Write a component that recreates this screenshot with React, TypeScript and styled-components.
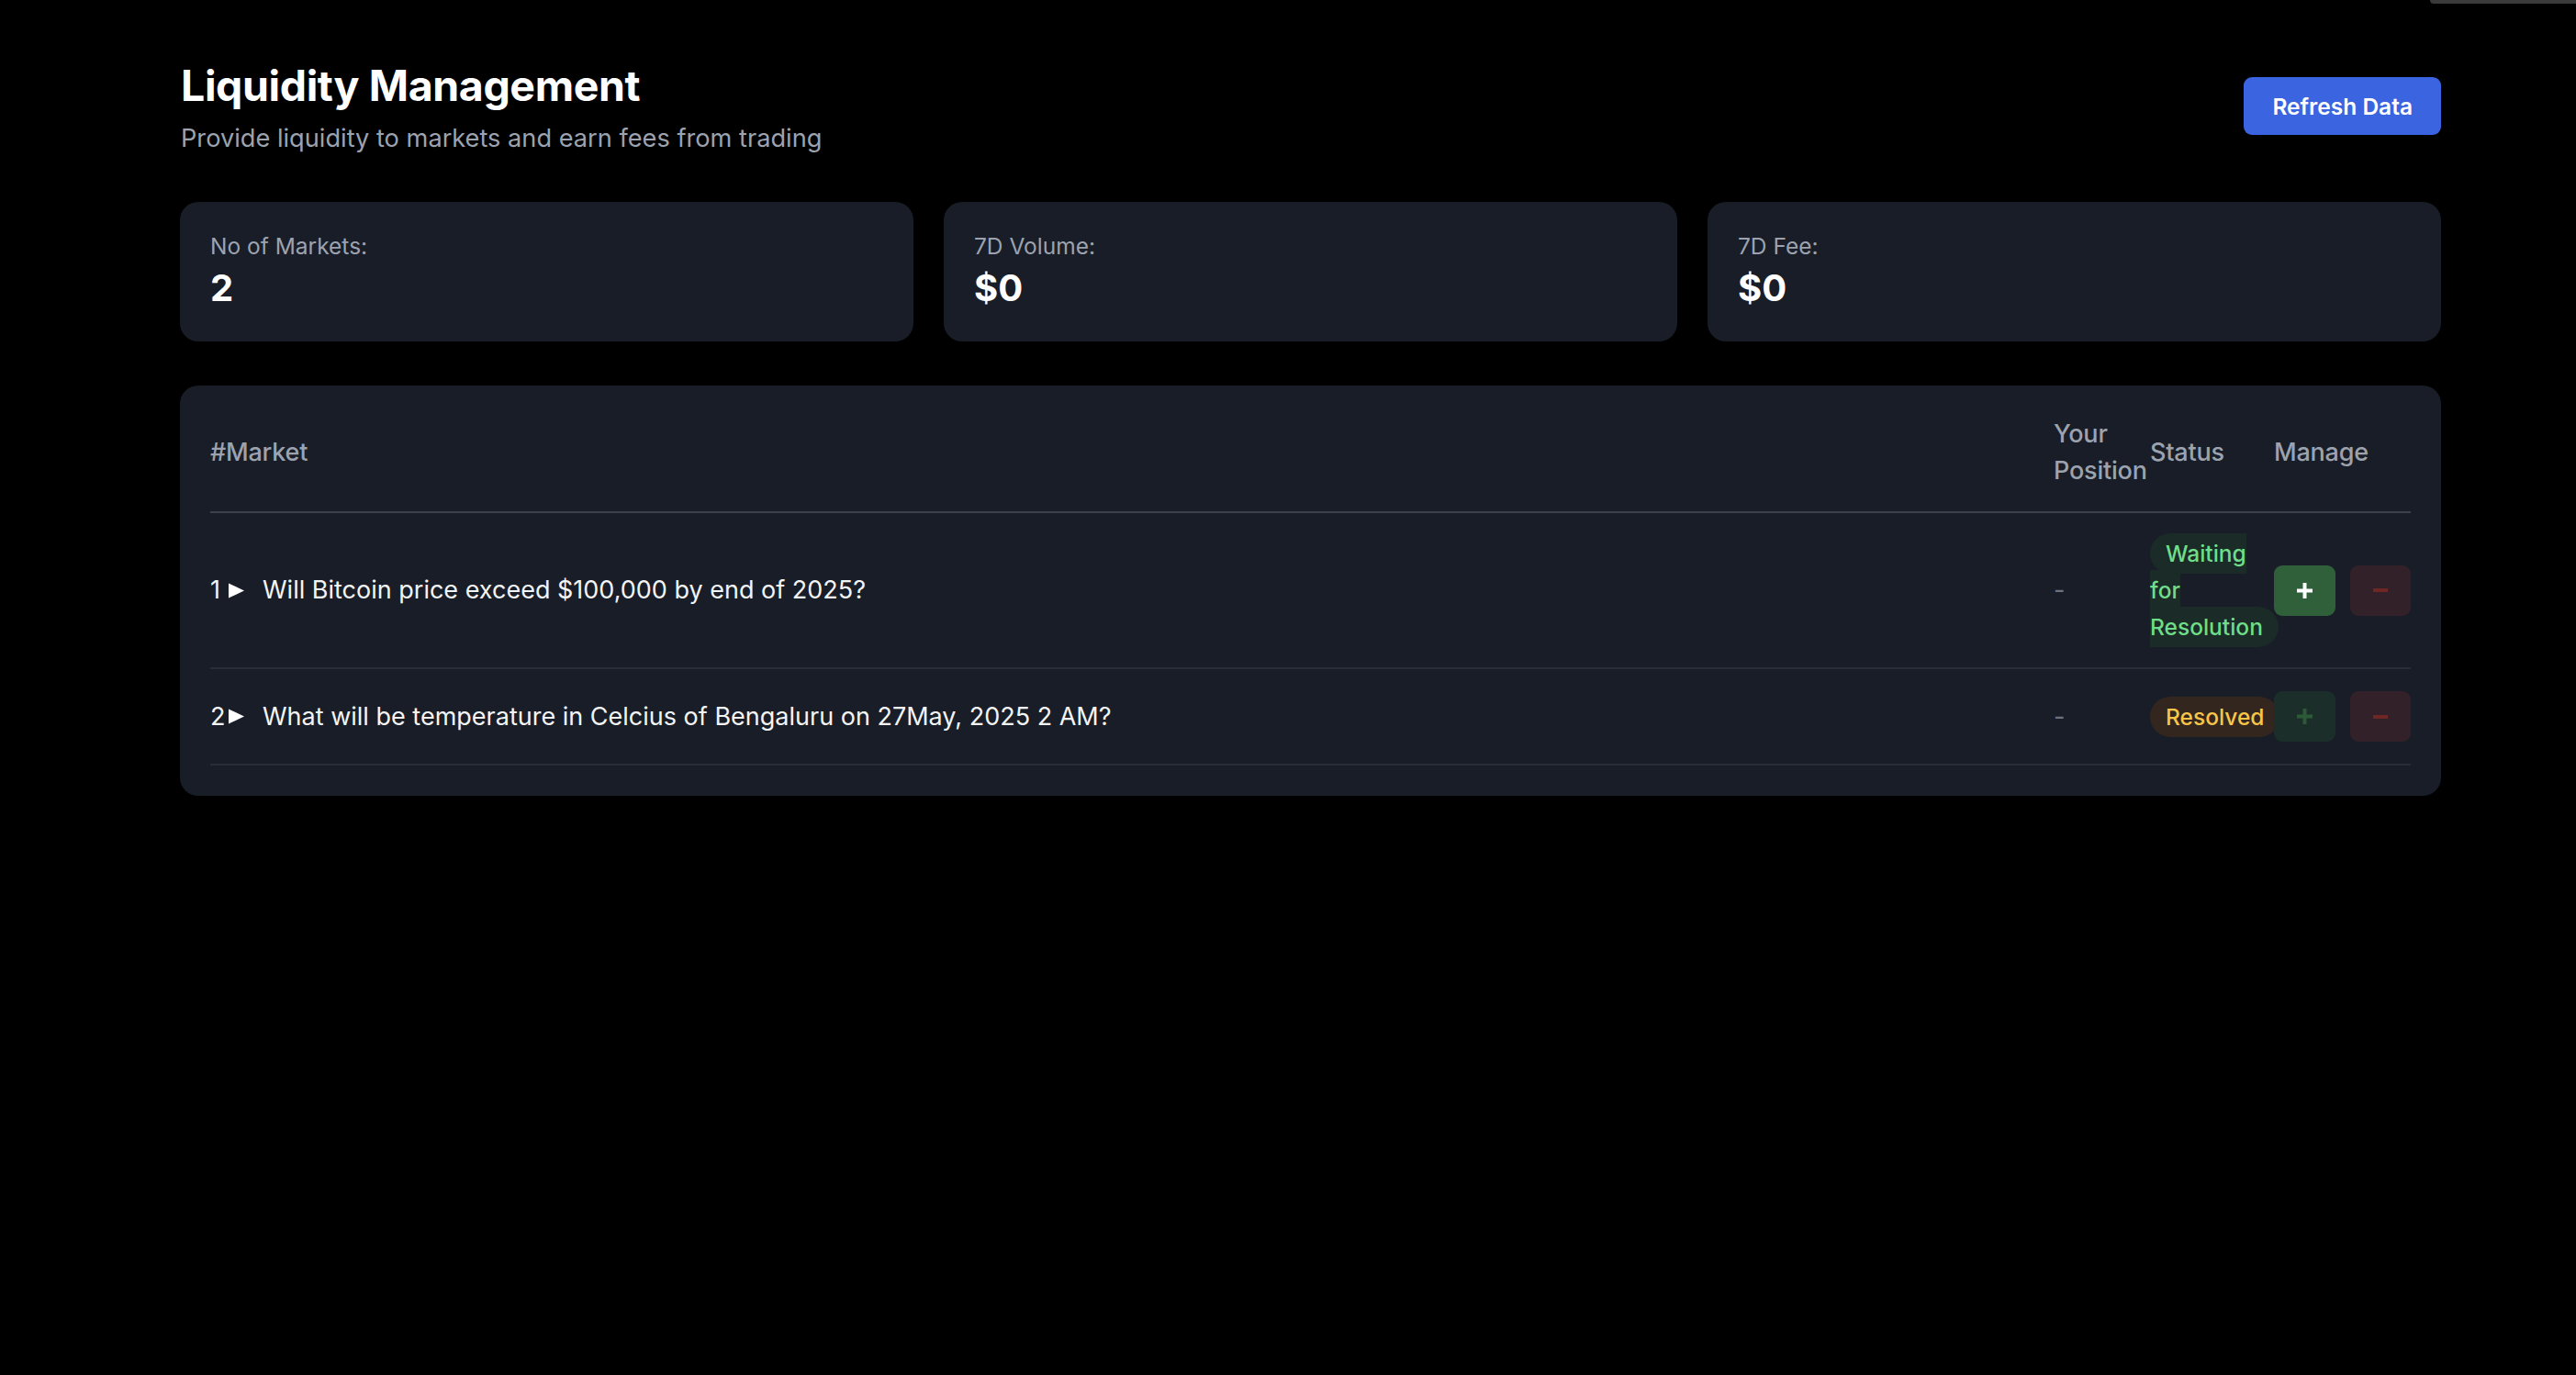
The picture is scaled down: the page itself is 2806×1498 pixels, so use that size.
import { FC } from 'react';
import styled, { createGlobalStyle } from 'styled-components';

// ----------------------------------------------------------------------------

const GlobalStyle = createGlobalStyle`
  html, body {
    margin: 0;
    padding: 0;
    background: #000;
    font-family: Inter, "Liberation Sans", sans-serif;
    color: #fff;
  }
`;

type Status = 'waiting' | 'resolved';

interface Market {
  id: number;
  question: string;
  position: string;
  status: Status;
  canAdd: boolean;
}

const markets: Market[] = [
  {
    id: 1,
    question: 'Will Bitcoin price exceed $100,000 by end of 2025?',
    position: '-',
    status: 'waiting',
    canAdd: true,
  },
  {
    id: 2,
    question: 'What will be temperature in Celcius of Bengaluru on 27May, 2025 2 AM?',
    position: '-',
    status: 'resolved',
    canAdd: false,
  },
];

const stats = [
  { label: 'No of Markets:', value: '2' },
  { label: '7D Volume:', value: '$0' },
  { label: '7D Fee:', value: '$0' },
];

// ----------------------------------------------------------------------------

const Page = styled.div`
  position: relative;
  min-height: 1498px;
  padding: 67px 147px 0 196px;
  box-sizing: border-box;
`;

const CornerTab = styled.div`
  position: absolute;
  top: 0;
  right: 0;
  width: 159px;
  height: 4px;
  background: #3a3a3a;
  border-bottom-left-radius: 12px;
`;

const Header = styled.header`
  display: flex;
  justify-content: space-between;
  align-items: flex-start;
  padding-left: 1px;
`;

const Title = styled.h1`
  margin: 0;
  font-size: 46.5px;
  line-height: 52px;
  font-weight: 700;
  letter-spacing: -0.4px;
  color: #fff;
`;

const Subtitle = styled.p`
  margin: 12px 0 0;
  font-size: 27.2px;
  line-height: 40px;
  color: #9ca3af;
`;

const RefreshButton = styled.button`
  height: 63px;
  margin-top: 17px;
  padding: 0 31px;
  border: none;
  border-radius: 9px;
  background: #3a64e0;
  color: #fff;
  font-family: inherit;
  font-size: 24.5px;
  font-weight: 600;
  cursor: pointer;
`;

const StatsGrid = styled.div`
  display: grid;
  grid-template-columns: repeat(3, 1fr);
  gap: 33px;
  margin-top: 49px;
`;

const Panel = styled.div`
  background: #181d27;
  border-radius: 20px;
`;

const StatCard = styled(Panel)`
  height: 152px;
  box-sizing: border-box;
  padding: 31px 33px;
`;

const StatLabel = styled.div`
  font-size: 24.5px;
  line-height: 35px;
  color: #9ca3af;
`;

const StatValue = styled.div`
  font-size: 40px;
  line-height: 56px;
  font-weight: 700;
  color: #fff;
`;

const TablePanel = styled(Panel)`
  margin-top: 48px;
  padding: 33px;
`;

const columns = '1fr 105px 135px 149px';

const HeadRow = styled.div`
  display: grid;
  grid-template-columns: ${columns};
  align-items: center;
  padding-bottom: 24px;
  border-bottom: 2px solid #3b414d;
`;

const HeadCell = styled.div`
  font-size: 27px;
  line-height: 40px;
  font-weight: 500;
  color: #9ca3af;
  letter-spacing: -0.2px;
`;

const Row = styled.div`
  display: grid;
  grid-template-columns: ${columns};
  align-items: center;
  padding: 24px 0;
  border-bottom: 2px solid #282e39;
`;

const MarketCell = styled.div`
  display: flex;
  align-items: center;
  font-size: 27px;
  line-height: 40px;
  color: #f3f4f6;
`;

const Index = styled.span`
  width: 19px;
  flex-shrink: 0;
`;

const Expander = styled.span`
  display: inline-flex;
  width: 19px;
  height: 17px;
  margin-right: 19px;
  flex-shrink: 0;
`;

const PositionCell = styled.div`
  font-size: 27px;
  line-height: 40px;
  color: #6b7280;
`;

const StatusCell = styled.div`
  font-size: 24.5px;
  line-height: 40px;
`;

const Badge = styled.span<{ $status: Status }>`
  padding: 7px 17px;
  border-radius: 9999px;
  font-weight: 500;
  color: ${(p) => (p.$status === 'waiting' ? '#6fdd89' : '#f7c548')};
  background: ${(p) => (p.$status === 'waiting' ? '#1b2b27' : '#33261f')};
`;

const ManageCell = styled.div`
  display: flex;
  align-items: center;
  gap: 16px;
  min-height: 55px;
`;

const ActionButton = styled.button<{ $kind: 'add' | 'remove'; $enabled: boolean }>`
  width: 67px;
  height: 55px;
  border: none;
  border-radius: 9px;
  display: flex;
  align-items: center;
  justify-content: center;
  padding: 0;
  cursor: ${(p) => (p.$enabled ? 'pointer' : 'not-allowed')};
  background: ${(p) =>
    p.$kind === 'add' ? (p.$enabled ? '#2f603a' : '#1c2e2a') : '#33212a'};
  color: ${(p) =>
    p.$kind === 'add' ? (p.$enabled ? '#ffffff' : '#2c5937') : '#6d2727'};
`;

// ----------------------------------------------------------------------------

const PlusIcon: FC = () => (
  <svg width="17" height="17" viewBox="0 0 17 17">
    <rect x="6.5" y="0" width="4" height="17" fill="currentColor" />
    <rect x="0" y="6.5" width="17" height="4" fill="currentColor" />
  </svg>
);

const MinusIcon: FC = () => (
  <svg width="16" height="4" viewBox="0 0 16 4">
    <rect x="0" y="0" width="16" height="4" fill="currentColor" />
  </svg>
);

const Triangle: FC = () => (
  <svg width="19" height="17" viewBox="0 0 19 17">
    <path d="M1 0.5 L18 8.5 L1 16.5 Z" fill="#ffffff" />
  </svg>
);

const MarketRow: FC<{ market: Market }> = (props) => {
  const { market } = props;

  return (
    <Row>
      <MarketCell>
        <Index>{market.id}</Index>
        <Expander>
          <Triangle />
        </Expander>
        <span>{market.question}</span>
      </MarketCell>
      <PositionCell>{market.position}</PositionCell>
      <StatusCell>
        <Badge $status={market.status}>
          {market.status === 'waiting' ? 'Waiting for Resolution' : 'Resolved'}
        </Badge>
      </StatusCell>
      <ManageCell>
        <ActionButton $kind="add" $enabled={market.canAdd}>
          <PlusIcon />
        </ActionButton>
        <ActionButton $kind="remove" $enabled={false}>
          <MinusIcon />
        </ActionButton>
      </ManageCell>
    </Row>
  );
};

const App: FC = () => {
  return (
    <Page>
      <GlobalStyle />
      <CornerTab />
      <Header>
        <div>
          <Title>Liquidity Management</Title>
          <Subtitle>Provide liquidity to markets and earn fees from trading</Subtitle>
        </div>
        <RefreshButton>Refresh Data</RefreshButton>
      </Header>

      <StatsGrid>
        {stats.map((s) => (
          <StatCard key={s.label}>
            <StatLabel>{s.label}</StatLabel>
            <StatValue>{s.value}</StatValue>
          </StatCard>
        ))}
      </StatsGrid>

      <TablePanel>
        <HeadRow>
          <HeadCell>#Market</HeadCell>
          <HeadCell>Your Position</HeadCell>
          <HeadCell>Status</HeadCell>
          <HeadCell>Manage</HeadCell>
        </HeadRow>
        {markets.map((m) => (
          <MarketRow key={m.id} market={m} />
        ))}
      </TablePanel>
    </Page>
  );
};

export default App;
